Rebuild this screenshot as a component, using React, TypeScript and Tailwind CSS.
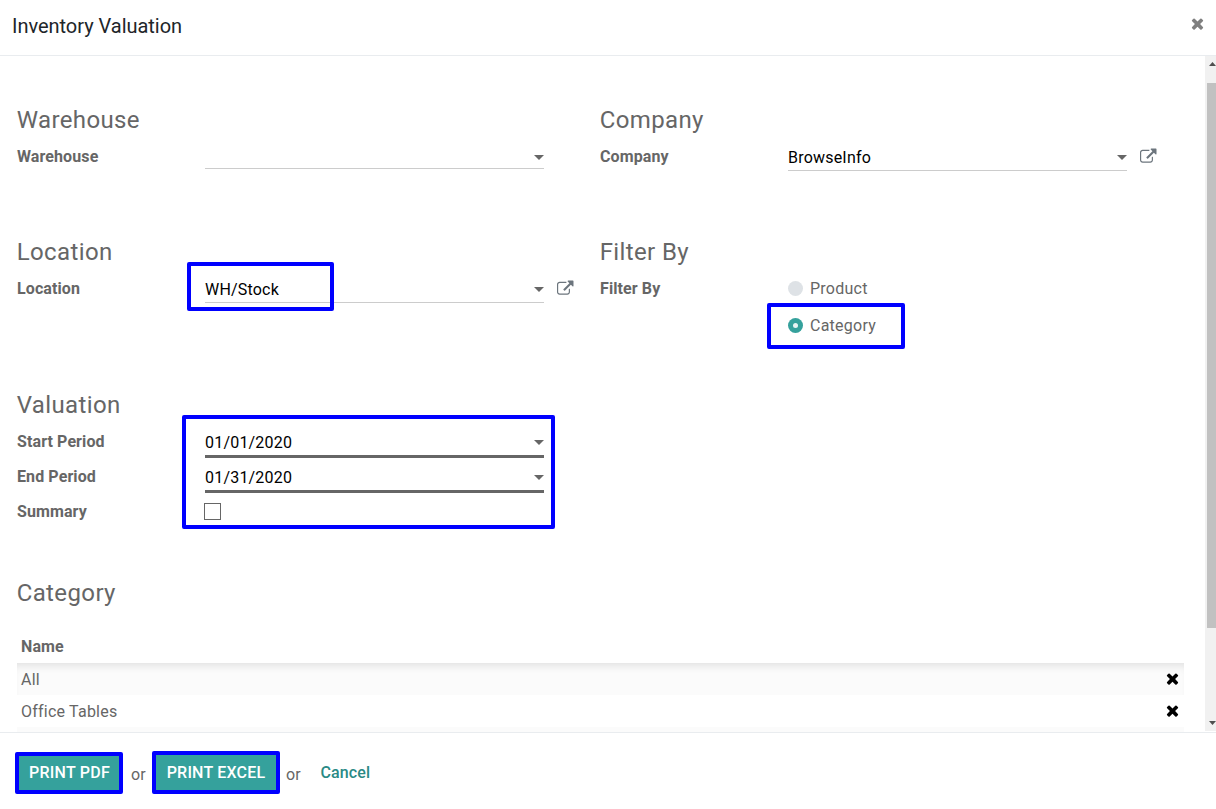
import type { ReactNode } from "react";

function CloseIcon({ className }: { className: string }) {
  return (
    <svg viewBox="0 0 1792 1792" className={className} fill="currentColor">
      <path d="M1490 1322q0 40-28 68l-136 136q-28 28-68 28t-68-28l-294-294-294 294q-28 28-68 28t-68-28l-136-136q-28-28-28-68t28-68l294-294-294-294q-28-28-28-68t28-68l136-136q28-28 68-28t68 28l294 294 294-294q28-28 68-28t68 28l136 136q28 28 28 68t-28 68l-294 294 294 294q28 28 28 68z" />
    </svg>
  );
}

function ExternalLink() {
  return (
    <button className="ml-[13px] mt-[10px] h-[17px] w-[17px] shrink-0 text-[#6c757d]">
      <svg viewBox="64 0 1792 1792" className="h-[16.5px] w-[16.5px] overflow-visible" fill="currentColor">
        <path d="M1472 992v320q0 119-84.5 203.5t-203.5 84.5h-832q-119 0-203.5-84.5t-84.5-203.5v-832q0-119 84.5-203.5t203.5-84.5h704q14 0 23 9t9 23v64q0 14-9 23t-23 9h-704q-66 0-113 47t-47 113v832q0 66 47 113t113 47h832q66 0 113-47t47-113v-320q0-14 9-23t23-9h64q14 0 23 9t9 23zm384-864v512q0 26-19 45t-45 19-45-19l-176-176-652 652q-10 10-23 10t-23-10l-114-114q-10-10-10-23t10-23l652-652-176-176q-19-19-19-45t19-45 45-19h512q26 0 45 19t19 45z" />
      </svg>
    </button>
  );
}

function Caret() {
  return (
    <svg viewBox="0 0 10 5" className="h-[5px] w-[10px]" fill="#666666">
      <path d="M0 0h10L5 5z" />
    </svg>
  );
}

function Highlight({ className }: { className: string }) {
  return <div className={`pointer-events-none absolute rounded-[2px] border-4 border-[#0000ff] ${className}`} />;
}

function Group({ title, className, children }: { title: string; className: string; children?: ReactNode }) {
  return (
    <section className={`w-[583px] ${className}`}>
      <h2 className="-ml-px h-9 pl-[0.7px] text-2xl leading-9 tracking-[0.38px]">{title}</h2>
      {children}
    </section>
  );
}

function Row({ label, children }: { label: string; children: ReactNode }) {
  return (
    <div className="flex min-h-[35px] items-start">
      <label className="w-[188px] shrink-0 pt-[7px] font-bold leading-6 tracking-[0.1px]">{label}</label>
      {children}
    </div>
  );
}

function Field({ value, className }: { value: string; className: string }) {
  return (
    <div className={`flex w-[339px] items-start justify-between text-black ${className}`}>
      <span className="pt-2 leading-6 tracking-[0.2px]">{value}</span>
      <span className="pt-[17px]">
        <Caret />
      </span>
    </div>
  );
}

function Option({ label, checked }: { label: string; checked?: boolean }) {
  return (
    <div className="flex h-[37px] items-center">
      {checked ? (
        <span className="-mt-px mr-[7px] flex h-[15px] w-[15px] items-center justify-center rounded-full bg-[#35a19c]">
          <span className="h-[5px] w-[5px] rounded-full bg-[#e8f4f3]" />
        </span>
      ) : (
        <span className="mr-[7px] h-[15px] w-[15px] rounded-full bg-[#dee2e6]" />
      )}
      <span className="leading-6 tracking-[0.25px]">{label}</span>
    </div>
  );
}

export default function App() {
  return (
    <div className="flex h-[809px] w-[1216px] flex-col overflow-hidden bg-white font-['Roboto',sans-serif] text-base text-[#666666]">
      <header className="flex h-14 shrink-0 items-center justify-between border-b border-[#e9ecef] pl-3 pr-[10px]">
        <h1 className="pb-1 text-xl tracking-[-0.03px] text-[#212529]">Inventory Valuation</h1>
        <button className="pb-[9px] text-[#7f7f7f]">
          <CloseIcon className="h-[17px] w-[17px]" />
        </button>
      </header>

      <div className="flex h-[676px] shrink-0">
        <main className="h-full w-[1205px] overflow-hidden pl-[17px] pt-[46px]">
          <div className="flex h-[132px]">
            <Group title="Warehouse" className="">
              <Row label="Warehouse">
                <Field value="" className="h-[31px] border-b border-[#cccccc]" />
              </Row>
            </Group>
            <Group title="Company" className="">
              <Row label="Company">
                <Field value="BrowseInfo" className="h-[33px] border-b border-[#cccccc]" />
                <ExternalLink />
              </Row>
            </Group>
          </div>

          <div className="flex h-[153px]">
            <Group title="Location" className="relative">
              <Row label="Location">
                <Field value="WH/Stock" className="h-[33px] border-b border-[#cccccc]" />
                <ExternalLink />
              </Row>
              <Highlight className="left-[170px] top-7 h-[49px] w-[147px]" />
            </Group>
            <Group title="Filter By" className="relative">
              <Row label="Filter By">
                <div>
                  <Option label="Product" />
                  <Option label="Category" checked />
                </div>
              </Row>
              <Highlight className="left-[167px] top-[69px] h-[46px] w-[138px]" />
            </Group>
          </div>

          <div className="flex h-[188px]">
            <Group title="Valuation" className="relative">
              <Row label="Start Period">
                <Field value="01/01/2020" className="h-[35px] border-b-[3px] border-[#666666]" />
              </Row>
              <Row label="End Period">
                <Field value="01/31/2020" className="h-[35px] border-b-[3px] border-[#666666]" />
              </Row>
              <Row label="Summary">
                <span className="-ml-px mt-[10px] h-[17px] w-[17px] border border-[#666666]" />
              </Row>
              <Highlight className="left-[165px] top-7 h-[114px] w-[373px]" />
            </Group>
          </div>

          <h2 className="-ml-px h-9 pl-[0.7px] text-2xl leading-9 tracking-[0.38px]">Category</h2>
          <div className="mt-[19px] w-[1167px]">
            <div className="flex h-[33px] items-center px-1 font-bold tracking-[0.1px]">Name</div>
            <div className="flex h-8 items-center justify-between bg-[#fbfbfb] pl-1 pr-[3px] shadow-[inset_0_8px_10px_-6px_rgba(0,0,0,0.12)]">
              <span className="pt-px tracking-[0.22px]">All</span>
              <CloseIcon className="mb-px h-[17px] w-[17px] text-black" />
            </div>
            <div className="flex h-8 items-center justify-between pl-1 pr-[3px]">
              <span className="pt-px tracking-[0.22px]">Office Tables</span>
              <CloseIcon className="mb-px h-[17px] w-[17px] text-black" />
            </div>
            <div className="h-8 bg-[#fbfbfb]" />
          </div>
        </main>

        <div className="flex h-[675px] w-[11px] flex-col items-end overflow-hidden bg-[#f1f1f1]">
          <div className="flex h-[27px] w-[7px] shrink-0 items-start pt-[6px]">
            <svg viewBox="0 0 7 4" className="h-1 w-[7px]" fill="#505050">
              <path d="M0 4L3.5 0L7 4z" />
            </svg>
          </div>
          <div className="h-[545px] w-[9px] shrink-0 bg-[#c1c1c1]" />
          <div className="flex w-[7px] flex-1 items-end pb-[6px]">
            <svg viewBox="0 0 7 4" className="h-1 w-[7px]" fill="#505050">
              <path d="M0 0h7L3.5 4z" />
            </svg>
          </div>
        </div>
      </div>

      <footer className="flex flex-1 items-start border-t border-[#e9ecef] pl-[15px]">
        <button className="mt-[19px] h-[42px] w-[108px] rounded-[2px] border-4 border-[#0000ff] bg-[#35a19c] pb-px pl-px font-medium leading-8 tracking-[0.25px] text-white">
          PRINT PDF
        </button>
        <span className="ml-2 mt-[30px] w-[21px] leading-6">or</span>
        <button className="mt-[18px] h-[43px] w-[128px] rounded-[2px] border-4 border-[#0000ff] bg-[#35a19c] font-medium leading-[35px] tracking-[0.2px] text-white">
          PRINT EXCEL
        </button>
        <span className="ml-[6px] mt-[30px] leading-6">or</span>
        <button className="ml-5 mt-[28px] font-medium leading-6 tracking-[0.1px] text-[#2a8a85]">Cancel</button>
      </footer>
    </div>
  );
}
